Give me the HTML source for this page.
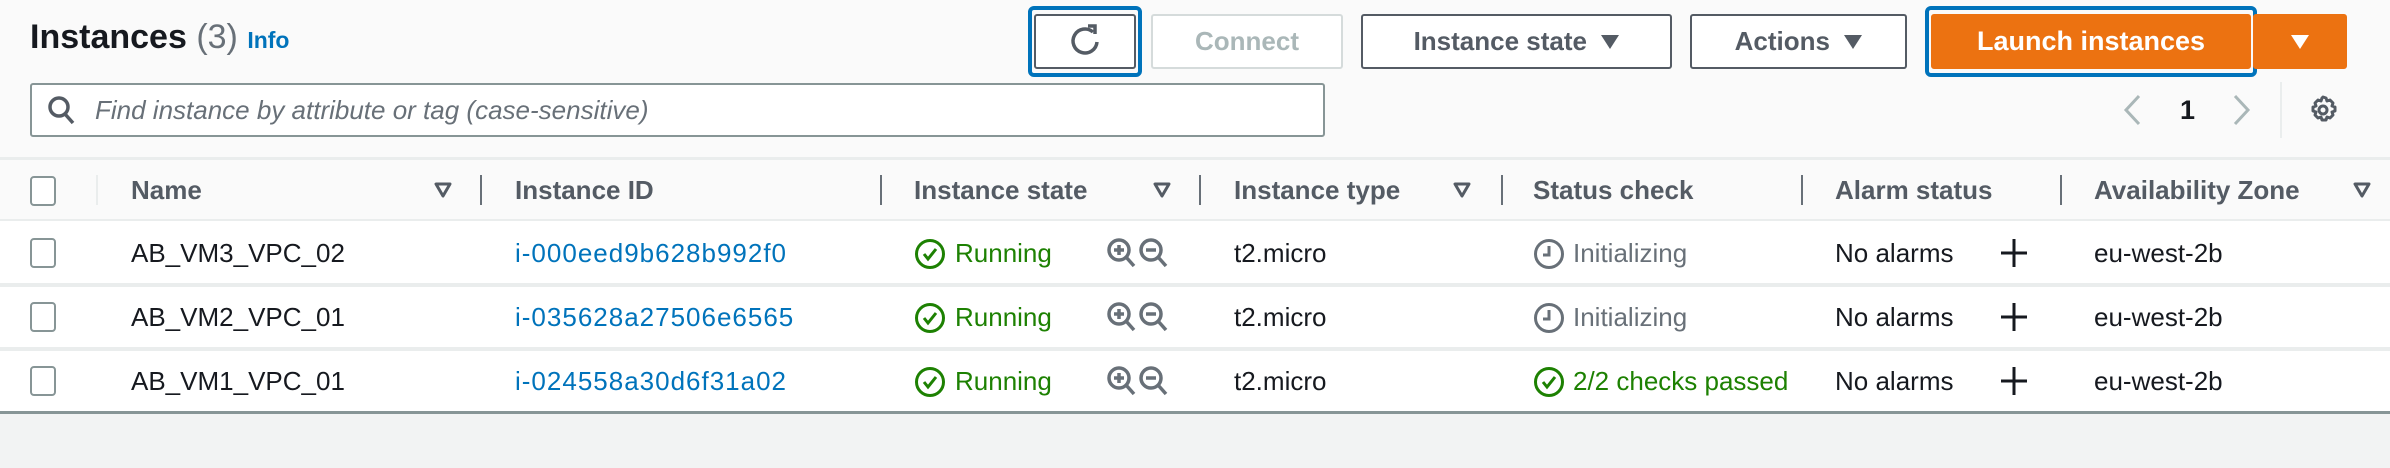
<!DOCTYPE html>
<html><head><meta charset="utf-8"><style>
*{box-sizing:border-box;margin:0;padding:0}
body{width:2390px;height:468px;background:#f2f3f3;font-family:"Liberation Sans",sans-serif;position:relative;overflow:hidden;color:#16191f}
.a{position:absolute}
.top{left:0;top:0;width:2390px;height:220px;background:#fafafa}
.btn{position:absolute;top:14px;height:55px;border:2px solid #545b64;border-radius:3px;background:#fff;font-weight:bold;font-size:26px;color:#545b64;display:flex;align-items:center;justify-content:center}
.hd{font-weight:bold;font-size:26px;color:#545b64;top:175px}
.sep{width:2px;height:30px;background:#687078;top:175px}
.rows{left:0;top:221px;width:2390px;height:193px;background:#fff;border-bottom:3px solid #879596}
.rl{left:0;width:2390px;height:4px;background:#eaeded}
.cb{width:26px;height:30px;border:2px solid #879596;border-radius:4px;background:#fff}
.t{font-size:26px;color:#16191f}
.id{font-size:26px;color:#0073bb;letter-spacing:1px}
.g{font-size:26px;color:#1d8102}
.gr{font-size:26px;color:#687078}
.tri{width:0;height:0;border-left:9px solid transparent;border-right:9px solid transparent;border-top:14px solid #545b64}
</style></head><body>
<div class="a top"></div>
<div class="a" style="left:30px;top:18px;font-size:34px;font-weight:bold;color:#16191f">Instances <span style="font-weight:normal;color:#687078">(3)</span> <span style="font-size:23px;color:#0073bb;font-weight:bold">Info</span></div>

<div class="a" style="left:1028px;top:6px;width:114px;height:71px;border:4px solid #0073bb;border-radius:6px"></div>
<div class="btn" style="left:1034px;width:102px">
<svg width="34" height="38" viewBox="0 0 34 38"><path d="M25 9A12 12 0 1 0 29 19" fill="none" stroke="#545b64" stroke-width="3.5"/><path d="M20 3L27 3L27 11" fill="none" stroke="#545b64" stroke-width="3.5"/></svg></div>
<div class="btn" style="left:1151px;width:192px;border-color:#d5dbdb;color:#aab7b8">Connect</div>
<div class="btn" style="left:1361px;width:311px">Instance state&nbsp;&nbsp;<span class="tri" style="display:inline-block"></span></div>
<div class="btn" style="left:1690px;width:217px">Actions&nbsp;&nbsp;<span class="tri" style="display:inline-block"></span></div>
<div class="a" style="left:1925px;top:6px;width:332px;height:71px;border:4px solid #0073bb;border-radius:6px"></div>
<div class="btn" style="left:1931px;width:320px;background:#ec7211;border-color:#ec7211;color:#fff;font-size:27px">Launch instances</div>
<div class="btn" style="left:2253px;width:94px;background:#ec7211;border-color:#ec7211"><span class="tri" style="display:inline-block;border-top-color:#fff"></span></div>

<div class="a" style="left:30px;top:83px;width:1295px;height:54px;border:2px solid #879596;border-radius:3px;background:#fff"></div>
<svg class="a" style="left:47px;top:95px" width="30" height="32" viewBox="0 0 30 32"><circle cx="12" cy="12" r="9" fill="none" stroke="#545b64" stroke-width="3.5"/><path d="M18 19L26 28" stroke="#545b64" stroke-width="3.5"/></svg>
<div class="a" style="left:95px;top:95px;font-size:26px;font-style:italic;color:#687078">Find instance by attribute or tag (case-sensitive)</div>

<svg class="a" style="left:2122px;top:94px" width="20" height="32" viewBox="0 0 20 32"><path d="M17 2L4 16L17 30" fill="none" stroke="#aab7b8" stroke-width="3"/></svg>
<div class="a" style="left:2180px;top:95px;font-size:27px;font-weight:bold">1</div>
<svg class="a" style="left:2232px;top:94px" width="20" height="32" viewBox="0 0 20 32"><path d="M3 2L16 16L3 30" fill="none" stroke="#aab7b8" stroke-width="3"/></svg>
<div class="a" style="left:2280px;top:82px;width:2px;height:56px;background:#eaeded"></div>
<svg class="a" style="left:2307px;top:94px" width="32" height="32" viewBox="0 0 32 32"><path d="M16 3l3 1 1 3 3 -1 3 3 -1 3 3 1v4l-3 1 1 3-3 3-3-1-1 3h-4l-1-3-3 1-3-3 1-3-3-1v-4l3-1-1-3 3-3 3 1 1-3z" fill="none" stroke="#545b64" stroke-width="3" stroke-linejoin="round"/><circle cx="16" cy="16" r="4" fill="none" stroke="#545b64" stroke-width="3"/></svg>

<div class="a" style="left:0;top:157px;width:2390px;height:3px;background:#eaeded"></div>
<div class="a" style="left:0;top:219px;width:2390px;height:3px;background:#eaeded"></div>
<div class="a cb" style="left:30px;top:176px"></div>
<div class="a" style="left:96px;top:175px;width:2px;height:30px;background:#eaeded"></div>
<div class="a hd" style="left:131px">Name</div>
<svg class="a" style="left:434px;top:182px" width="18" height="16" viewBox="0 0 18 16"><path d="M2 2H16L9 14Z" fill="none" stroke="#545b64" stroke-width="3" stroke-linejoin="round"/></svg>
<div class="a sep" style="left:480px"></div>
<div class="a hd" style="left:515px">Instance ID</div>
<div class="a sep" style="left:880px"></div>
<div class="a hd" style="left:914px">Instance state</div>
<svg class="a" style="left:1153px;top:182px" width="18" height="16" viewBox="0 0 18 16"><path d="M2 2H16L9 14Z" fill="none" stroke="#545b64" stroke-width="3" stroke-linejoin="round"/></svg>
<div class="a sep" style="left:1199px"></div>
<div class="a hd" style="left:1234px">Instance type</div>
<svg class="a" style="left:1453px;top:182px" width="18" height="16" viewBox="0 0 18 16"><path d="M2 2H16L9 14Z" fill="none" stroke="#545b64" stroke-width="3" stroke-linejoin="round"/></svg>
<div class="a sep" style="left:1501px"></div>
<div class="a hd" style="left:1533px">Status check</div>
<div class="a sep" style="left:1801px"></div>
<div class="a hd" style="left:1835px">Alarm status</div>
<div class="a sep" style="left:2060px"></div>
<div class="a hd" style="left:2094px">Availability Zone</div>
<svg class="a" style="left:2353px;top:182px" width="18" height="16" viewBox="0 0 18 16"><path d="M2 2H16L9 14Z" fill="none" stroke="#545b64" stroke-width="3" stroke-linejoin="round"/></svg>

<div class="a rows"></div>
<div class="a rl" style="top:283px"></div>
<div class="a rl" style="top:347px"></div>

<div class="a cb" style="left:30px;top:238px"></div>
<div class="a cb" style="left:30px;top:302px"></div>
<div class="a cb" style="left:30px;top:366px"></div>

<div class="a t" style="left:131px;top:238px">AB_VM3_VPC_02</div>
<div class="a t" style="left:131px;top:302px">AB_VM2_VPC_01</div>
<div class="a t" style="left:131px;top:366px">AB_VM1_VPC_01</div>

<div class="a id" style="left:515px;top:238px">i-000eed9b628b992f0</div>
<div class="a id" style="left:515px;top:302px">i-035628a27506e6565</div>
<div class="a id" style="left:515px;top:366px">i-024558a30d6f31a02</div>

<svg class="a" style="left:914px;top:237px" width="32" height="34" viewBox="0 0 32 34"><circle cx="16" cy="17" r="13.5" fill="none" stroke="#1d8102" stroke-width="3"/><path d="M10 17L14 22L22 12" fill="none" stroke="#1d8102" stroke-width="3"/></svg>
<svg class="a" style="left:914px;top:301px" width="32" height="34" viewBox="0 0 32 34"><circle cx="16" cy="17" r="13.5" fill="none" stroke="#1d8102" stroke-width="3"/><path d="M10 17L14 22L22 12" fill="none" stroke="#1d8102" stroke-width="3"/></svg>
<svg class="a" style="left:914px;top:365px" width="32" height="34" viewBox="0 0 32 34"><circle cx="16" cy="17" r="13.5" fill="none" stroke="#1d8102" stroke-width="3"/><path d="M10 17L14 22L22 12" fill="none" stroke="#1d8102" stroke-width="3"/></svg>
<div class="a g" style="left:955px;top:238px">Running</div>
<div class="a g" style="left:955px;top:302px">Running</div>
<div class="a g" style="left:955px;top:366px">Running</div>

<svg class="a" style="left:1106px;top:237px" width="64" height="34" viewBox="0 0 64 34"><g fill="none" stroke="#687078" stroke-width="3.5"><circle cx="13" cy="13" r="10"/><path d="M20 20L28 29"/><path d="M8 13H18M13 8V18"/><circle cx="45" cy="13" r="10"/><path d="M52 20L60 29"/><path d="M40 13H50"/></g></svg>
<svg class="a" style="left:1106px;top:301px" width="64" height="34" viewBox="0 0 64 34"><g fill="none" stroke="#687078" stroke-width="3.5"><circle cx="13" cy="13" r="10"/><path d="M20 20L28 29"/><path d="M8 13H18M13 8V18"/><circle cx="45" cy="13" r="10"/><path d="M52 20L60 29"/><path d="M40 13H50"/></g></svg>
<svg class="a" style="left:1106px;top:365px" width="64" height="34" viewBox="0 0 64 34"><g fill="none" stroke="#687078" stroke-width="3.5"><circle cx="13" cy="13" r="10"/><path d="M20 20L28 29"/><path d="M8 13H18M13 8V18"/><circle cx="45" cy="13" r="10"/><path d="M52 20L60 29"/><path d="M40 13H50"/></g></svg>

<div class="a t" style="left:1234px;top:238px">t2.micro</div>
<div class="a t" style="left:1234px;top:302px">t2.micro</div>
<div class="a t" style="left:1234px;top:366px">t2.micro</div>

<svg class="a" style="left:1533px;top:237px" width="32" height="34" viewBox="0 0 32 34"><circle cx="16" cy="17" r="13.5" fill="none" stroke="#687078" stroke-width="3"/><path d="M16 9V18H10" fill="none" stroke="#687078" stroke-width="3"/></svg>
<svg class="a" style="left:1533px;top:301px" width="32" height="34" viewBox="0 0 32 34"><circle cx="16" cy="17" r="13.5" fill="none" stroke="#687078" stroke-width="3"/><path d="M16 9V18H10" fill="none" stroke="#687078" stroke-width="3"/></svg>
<svg class="a" style="left:1533px;top:365px" width="32" height="34" viewBox="0 0 32 34"><circle cx="16" cy="17" r="13.5" fill="none" stroke="#1d8102" stroke-width="3"/><path d="M10 17L14 22L22 12" fill="none" stroke="#1d8102" stroke-width="3"/></svg>
<div class="a gr" style="left:1573px;top:238px">Initializing</div>
<div class="a gr" style="left:1573px;top:302px">Initializing</div>
<div class="a g" style="left:1573px;top:366px;width:230px;overflow:hidden;white-space:nowrap">2/2 checks passed</div>

<div class="a t" style="left:1835px;top:238px">No alarms</div>
<div class="a t" style="left:1835px;top:302px">No alarms</div>
<div class="a t" style="left:1835px;top:366px">No alarms</div>
<svg class="a" style="left:2000px;top:238px" width="28" height="30"><path d="M14 1V29M1 15H27" stroke="#16191f" stroke-width="3"/></svg>
<svg class="a" style="left:2000px;top:302px" width="28" height="30"><path d="M14 1V29M1 15H27" stroke="#16191f" stroke-width="3"/></svg>
<svg class="a" style="left:2000px;top:366px" width="28" height="30"><path d="M14 1V29M1 15H27" stroke="#16191f" stroke-width="3"/></svg>

<div class="a t" style="left:2094px;top:238px">eu-west-2b</div>
<div class="a t" style="left:2094px;top:302px">eu-west-2b</div>
<div class="a t" style="left:2094px;top:366px">eu-west-2b</div>
</body></html>
